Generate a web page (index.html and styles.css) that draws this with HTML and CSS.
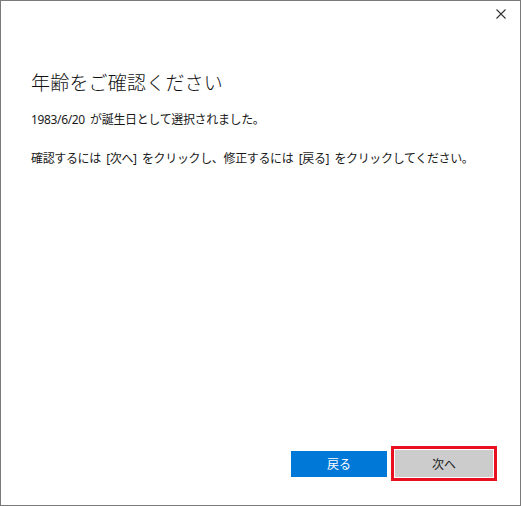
FILE: index.html
```html
<!DOCTYPE html>
<html lang="ja">
<head>
<meta charset="utf-8">
<title>年齢をご確認ください</title>
<link rel="stylesheet" href="styles.css">
</head>
<body>
<div class="window">
  <div class="titlebar">
    <button class="close" aria-label="閉じる">
      <svg width="10" height="10" viewBox="0 0 10 10"><path d="M0.5 0.5 L9.5 9.5 M9.5 0.5 L0.5 9.5" stroke="#333" stroke-width="1.1" fill="none"/></svg>
    </button>
  </div>
  <div class="content">
    <h1 class="heading">年齢をご確認ください</h1>
    <p class="text">1983/6/20 が誕生日として選択されました。</p>
    <p class="text">確認するには [次へ] をクリックし、修正するには [戻る] をクリックしてください。</p>
  </div>
  <div class="footer">
    <button class="btn btn-primary">戻る</button>
    <div class="highlight">
      <button class="btn btn-secondary">次へ</button>
    </div>
  </div>
</div>
</body>
</html>
```

FILE: styles.css
```css
html, body {
  margin: 0;
  padding: 0;
  background: #ffffff;
}
body {
  font-family: "Noto Sans", "Noto Sans CJK JP", sans-serif;
  color: #1a1a1a;
}
.window {
  box-sizing: border-box;
  width: 521px;
  height: 506px;
  border: 1px solid #7a7a7a;
  background: #ffffff;
  display: flex;
  flex-direction: column;
}
.titlebar {
  display: flex;
  justify-content: flex-end;
  height: 30px;
}
.close {
  width: 30px;
  height: 26px;
  margin-right: 4px;
  padding: 0;
  border: none;
  background: transparent;
  display: flex;
  align-items: center;
  justify-content: center;
}
.content {
  padding: 0 30px;
  flex: 1;
}
.heading {
  margin: 38px 0 0 0;
  font-family: "Noto Sans CJK JP", sans-serif;
  font-weight: 300;
  font-size: 19px;
  line-height: 26px;
  color: #111;
  letter-spacing: 0.2px;
}
.text {
  margin: 17px 0 0 0;
  font-size: 12px;
  line-height: 16px;
  letter-spacing: -0.35px;
  word-spacing: 2.5px;
  color: #1a1a1a;
}
.text + .text {
  margin-top: 23px;
}
.footer {
  display: flex;
  justify-content: flex-end;
  align-items: center;
  gap: 4px;
  padding: 0 23px 24px 0;
}
.btn {
  font-family: "Noto Sans CJK JP", sans-serif;
  font-size: 12px;
  border: none;
  padding: 0;
  height: 26px;
  width: 96px;
  display: flex;
  align-items: center;
  justify-content: center;
}
.btn-primary {
  background: #0078d7;
  color: #ffffff;
}
.btn-secondary {
  background: #cccccc;
  color: #222;
  width: 98px;
  height: 27px;
}
.highlight {
  border: 3px solid #e8101e;
  padding: 1px;
  background: #fff;
}
```
